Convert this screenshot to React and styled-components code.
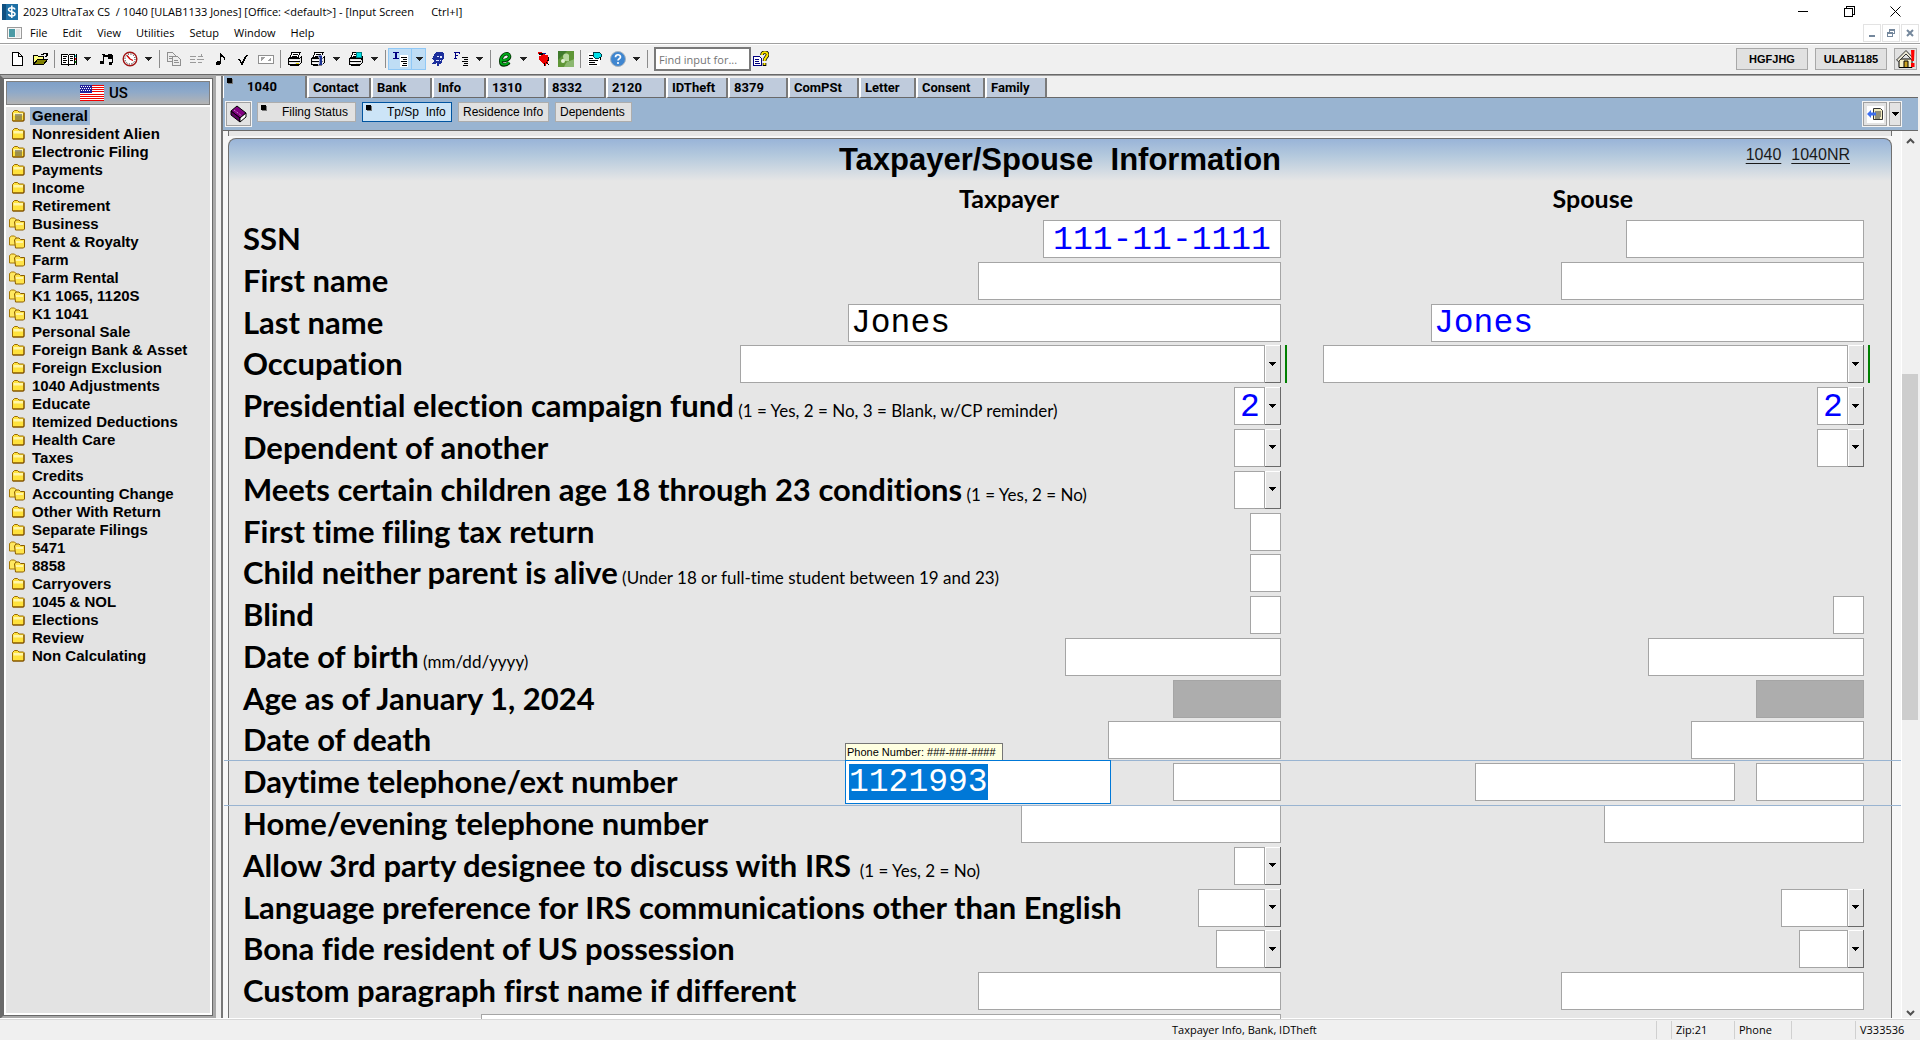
import React, { useEffect, useRef } from "react";
import styled, { createGlobalStyle, css } from "styled-components";

const ui = `"Open Sans", "Noto Sans", sans-serif`;
const arial = `"Liberation Sans", Arial, sans-serif`;
const formFont = `Lato, Carlito, sans-serif`;
const mono = `"Liberation Mono", "Courier New", monospace`;

const Global = createGlobalStyle`
  *, *::before, *::after { box-sizing: border-box; }
  html, body { margin: 0; padding: 0; }
  body { font-family: ${ui}; color: #000; background: #f0f0f0; }
  button, input, select { font: inherit; color: inherit; margin: 0; padding: 0; border-radius: 0; }
`;

const Window = styled.div`
  display: flex;
  flex-direction: column;
  height: 100vh;
  overflow: hidden;
  background: #f0f0f0;
`;

/* ---------- title and menu ---------- */

const TitleBar = styled.header`
  display: flex;
  align-items: center;
  height: 23px;
  flex: none;
  padding: 0 18px 0 2px;
  gap: 5px;
  background: #fff;
  font-size: 11px;
  line-height: 22px;
  white-space: pre;
`;
const Grow = styled.div`
  flex: 1;
`;
const CaptionButtons = styled.div`
  display: flex;
  gap: 32px;
`;
const CaptionButton = styled.button`
  display: flex;
  align-items: center;
  justify-content: center;
  width: 14px;
  height: 20px;
  border: 0;
  background: none;
`;
const MenuBar = styled.nav`
  display: flex;
  align-items: center;
  height: 21px;
  flex: none;
  padding: 0 1px 0 7px;
  background: #fff;
  border-bottom: 1px solid #a0a0a0;
`;
const MenuList = styled.div`
  display: flex;
  flex: 1;
  gap: 15px;
  padding-left: 8px;
`;
const MenuItem = styled.button`
  border: 0;
  background: none;
  font-size: 11px;
  line-height: 18px;
`;
const ChildButtons = styled.div`
  display: flex;
  gap: 1px;
`;
const ChildButton = styled.button`
  display: flex;
  align-items: center;
  justify-content: center;
  width: 18px;
  height: 18px;
  border: 1px solid #e3e3e3;
  background: #fff;
`;

/* ---------- toolbar ---------- */

const Toolbar = styled.div`
  display: flex;
  align-items: center;
  height: 30px;
  flex: none;
  padding: 0 3px 1px 5px;
  background: #f0f0f0;
  border-top: 1px solid #fff;
`;
const ToolButton = styled.button`
  display: flex;
  align-items: center;
  justify-content: center;
  width: 23px;
  height: 22px;
  border: 0;
  background: none;
`;
const DropButton = styled(ToolButton)`
  width: 15px;
`;
const ActiveTool = styled.div`
  display: flex;
  height: 22px;
  background: #bfddf5;
  outline: 1px solid #90c8f6;
  outline-offset: -1px;
  ${DropButton} {
    border-left: 1px solid #90c8f6;
  }
`;
const Separator = styled.span`
  width: 6px;
  height: 18px;
  background: linear-gradient(#8c8c8c, #8c8c8c) center / 1px 100% no-repeat;
`;
const FindBox = styled.input`
  width: 97px;
  height: 24px;
  margin: 0 2px 0 4px;
  padding: 0 3px;
  border: 2px double #7a7a7a;
  outline: 0;
  background: #fff;
  font-size: 11px;
  &::placeholder {
    color: #757575;
    opacity: 1;
  }
`;
const ClientButton = styled.button`
  width: 72px;
  height: 22px;
  margin-right: 7px;
  border: 1px solid #a8a8a8;
  background: #e1e1e1;
  font: bold 11px ${arial};
`;
const HomeButton = styled(ToolButton)`
  border: 1px solid #a8a8a8;
  background: #e1e1e1;
`;

/* ---------- workspace ---------- */

const Workspace = styled.main`
  display: flex;
  flex: 1;
  min-height: 0;
  gap: 5px;
  border-top: 1px solid #696969;
  box-shadow: inset 0 1px 0 #a0a0a0;
`;
const Sidebar = styled.aside`
  display: flex;
  flex-direction: column;
  width: 216px;
  flex: none;
  padding: 1px;
  border: 3px solid #a9a9a9;
  border-left: 3px double #696969;
  background: #696969;
`;
const SidebarInner = styled.div`
  display: flex;
  flex-direction: column;
  flex: 1;
  border: 2px solid #fff;
  background: #e3e3e3;
`;
const Region = styled.button`
  display: flex;
  align-items: center;
  justify-content: center;
  gap: 5px;
  height: 24px;
  flex: none;
  padding-right: 8px;
  border: 1px solid #808080;
  background: linear-gradient(#7fa0c8, #8ea9c9 45%, #b4b4b4);
  font: 500 15px Roboto, sans-serif;
`;
const FolderList = styled.ul`
  margin: 0;
  padding: 0 0 0 3px;
  border-top: 2px solid #fff;
  list-style: none;
`;
const FolderItem = styled.li`
  display: flex;
  align-items: center;
  height: 18px;
  gap: 4px;
`;
const FolderLink = styled.a`
  padding: 0 2px;
  color: #000;
  font: bold 15px/18px ${arial};
  text-decoration: none;
  background: ${(p) => (p.$active ? "#99b4d1" : "none")};
`;

const Screen = styled.section`
  display: flex;
  flex-direction: column;
  flex: 1;
  min-width: 0;
  margin: 1px 2px 0 0;
  border-left: 2px solid #767676;
`;
const Tabs = styled.nav`
  display: flex;
  align-items: flex-end;
  height: 22px;
  flex: none;
  background: linear-gradient(#696969, #696969) bottom / 100% 1px no-repeat;
`;
const Tab = styled.button`
  position: relative;
  width: ${(p) => p.$w}px;
  height: 20px;
  padding: 0 0 0 4px;
  border: 0;
  border-left: 2px solid #fff;
  border-right: 2px solid #7a7a7a;
  border-bottom: 1px solid #696969;
  background: #bfcbdc;
  font: bold 13px/20px Roboto, sans-serif;
  text-align: left;
  ${(p) =>
    p.$active &&
    css`
      height: 22px;
      padding-left: 23px;
      border-bottom: 0;
      border-left-width: 1px;
      background: #99b4d1;
    `}
`;
const Marker = styled.i`
  position: absolute;
  left: 3px;
  top: 2px;
  width: 5px;
  height: 5px;
  background: #000;
  box-shadow: 1px 1px 0 #777;
`;
const SubBar = styled.div`
  display: flex;
  align-items: flex-start;
  gap: 6px;
  height: 33px;
  flex: none;
  padding: 4px 17px 0 3px;
  background: #99b4d1;
  border-bottom: 1px solid #696969;
`;
const SendGroup = styled.div`
  display: flex;
  gap: 2px;
  margin-left: auto;
  outline: 1px solid #f4f4f4;
`;
const BookButton = styled.button`
  display: flex;
  align-items: center;
  justify-content: center;
  width: ${(p) => p.$w}px;
  height: 24px;
  border: 1px solid #a0a0a0;
  outline: 1px solid #f4f4f4;
  background: #e3e3e3;
`;
const SubTab = styled.button`
  position: relative;
  width: ${(p) => p.$w}px;
  height: 20px;
  padding: 0 0 0 ${(p) => (p.$marked ? 24 : 4)}px;
  border: 1px solid ${(p) => (p.$active ? "#0054a0" : "#adadad")};
  background: ${(p) => (p.$active ? "#cce4f7" : "#e1e1e1")};
  font: 12px/18px ${arial};
  text-align: left;
  white-space: pre;
`;

const Body = styled.div`
  display: flex;
  flex: 1;
  min-height: 0;
  overflow: hidden;
  background: #f7f7f7;
`;
const Sheets = styled.div`
  display: flex;
  flex-direction: column;
  flex: 1;
  min-width: 0;
  padding: 0 9px 0 5px;
`;
const PreviousSheet = styled.div`
  height: 5px;
  flex: none;
  margin-bottom: 2px;
  border: solid #707070;
  border-width: 0 1px;
  background: #e6e6e6;
`;
const Sheet = styled.form`
  display: flex;
  flex-direction: column;
  flex: 1;
  min-height: 0;
  border: 1px solid #707070;
  border-bottom: 0;
  border-radius: 8px 8px 0 0;
  background: #e6e6e6 linear-gradient(#99b4d8, #b4c9dd 40%, #e6e6e6) top / 100% 42px no-repeat;
`;
const SheetHead = styled.div`
  display: grid;
  grid-template-columns: 1fr auto 1fr;
  align-items: center;
  height: 42px;
  flex: none;
  padding: 0 41px;
`;
const SheetTitle = styled.h1`
  grid-column: 2;
  margin: 0;
  font: bold 31px/42px ${arial};
  white-space: pre;
`;
const SheetLinks = styled.div`
  display: flex;
  justify-content: flex-end;
  gap: 10px;
  padding-bottom: 10px;
  a {
    color: #1a1a1a;
    font: 16px/20px ${arial};
    text-underline-offset: 3px;
  }
`;
const columns = css`
  display: grid;
  grid-template-columns: 1038fr 583fr;
  padding: 0 27px 0 14px;
`;
const ColumnHeads = styled.div`
  ${columns}
  height: 39px;
  flex: none;
  font: bold 25px/35px ${formFont};
  text-align: right;
  span {
    padding-right: 222px;
  }
  span + span {
    padding-right: 231px;
  }
`;
const Rows = styled.div`
  display: grid;
  grid-template-rows: repeat(19, minmax(41px, 1fr)) 5px;
  flex: 1;
  min-height: 0;
`;
const Row = styled.div`
  ${columns}
  position: relative;
  min-height: 0;
`;
const FocusLines = styled.div`
  position: absolute;
  z-index: 1;
  left: -5px;
  right: -10px;
  top: -3px;
  height: 46px;
  border: solid #99b4d1;
  border-width: 1px 0;
  pointer-events: none;
`;
const Cell = styled.div`
  display: flex;
  justify-content: flex-end;
  position: relative;
  min-width: 0;
  ${(p) => p.$focus && css`z-index: 2;`}
`;
const Label = styled.label`
  flex: 1;
  font: bold 31px/36px ${formFont};
  font-variant-ligatures: none;
  white-space: pre;
`;
const Note = styled.small`
  font: 17px/20px ${formFont};
  font-variant-ligatures: none;
`;
const fieldBox = css`
  height: 38px;
  border: 1px solid #a5a5a5;
  outline: 0;
  background: #fff;
  font: 33px/36px ${mono};
`;
const Field = styled.input`
  ${fieldBox}
  width: ${(p) => p.$w}px;
  flex: none;
  padding: ${(p) => (p.$center ? "2px 0 0" : "2px 2px 0")};
  text-align: ${(p) => (p.$center ? "center" : "left")};
  color: ${(p) => (p.$ink === "own" ? "#000" : "#0000ff")};
  ${(p) => p.readOnly && css`background: #adadad;`}
  ${(p) =>
    p.$focus &&
    css`
      position: relative;
      border-color: #fff;
      box-shadow: 0 0 0 2px #fff, 0 0 0 3px #0078d7;
      padding: 0;
      &::selection {
        background: #0078d7;
        color: #fff;
      }
    `}
`;
const Combo = styled.div`
  display: flex;
  position: relative;
  width: ${(p) => p.$w}px;
  height: 38px;
  flex: none;
`;
const ComboSelect = styled.select`
  ${fieldBox}
  flex: 1;
  min-width: 0;
  padding: 2px 0 0 5px;
  appearance: none;
  color: #0000ff;
`;
const ComboArrow = styled.span`
  display: flex;
  align-items: center;
  justify-content: center;
  width: 16px;
  border: solid #696969;
  border-width: 0 1px 1px 0;
  background: #e6e6e6;
  box-shadow: inset 1px 1px 0 #fff;
`;
const MoreMark = styled.i`
  position: absolute;
  right: -6px;
  top: 0;
  width: 2px;
  height: 38px;
  background: #008000;
`;
const Gap = styled.span`
  width: ${(p) => p.$w}px;
  flex: none;
`;
const Hint = styled.div`
  position: absolute;
  right: 278px;
  top: -20px;
  width: 158px;
  height: 18px;
  padding: 0 2px 0 1px;
  border: 1px solid #767676;
  background: #ffffe1;
  font: 11px/16px ${arial};
  white-space: nowrap;
`;

const ScrollTrack = styled.div`
  display: grid;
  grid-template-rows: 20px 223fr 345fr 281fr 18px;
  justify-items: center;
  align-items: center;
  width: 17px;
  flex: none;
  border-left: 1px solid #fff;
  background: #f0f0f0;
`;
const Thumb = styled.div`
  grid-row: 3;
  width: 100%;
  height: 100%;
  background: #cdcdcd;
`;
const TrackEnd = styled.div`
  grid-row: 5;
`;

const StatusBar = styled.footer`
  display: flex;
  align-items: center;
  height: 21px;
  flex: none;
  border-top: 1px solid #d7d7d7;
  box-shadow: 0 -1px 0 #fff;
  font-size: 11px;
  line-height: 18px;
`;
const StatusMain = styled.div`
  flex: 1;
  display: grid;
  grid-template-columns: 1172fr 484fr;
`;
const StatusCell = styled.div`
  width: ${(p) => p.$w}px;
  height: 18px;
  padding-left: 4px;
  border-left: 1px solid #d0d0d0;
`;

/* ---------- icons ---------- */

const Svg = ({ w = 16, h = 16, children }) => (
  <svg width={w} height={h} viewBox={`0 0 ${w} ${h}`} aria-hidden="true" style={{ display: "block" }} shapeRendering="crispEdges">
    {children}
  </svg>
);
const Down = ({ color = "#222" }) => (
  <Svg w={7} h={4}>
    <path d="M0 0h7v1H0zM1 1h5v1H1zM2 2h3v1H2zM3 3h1v1H3z" fill={color} />
  </Svg>
);
const Sheetlet = ({ x, y }) => (
  <g transform={`translate(${x} ${y})`}>
    <path d="M.5.5h5l3 3v6h-8z" fill="#eee" stroke="#909090" />
    <path d="M2 4.5h4M2 6.5h5" stroke="#909090" />
  </g>
);
const PrinterShape = () => (
  <>
    <path d="M5 1.500h8l-2 5H3z" fill="#fff" stroke="#000" />
    <path d="M6 3.500h5M5 5.500h5" stroke="#000" />
    <path d="M1.500 7.500h11l2-2v6l-2 2h-11z" fill="#e4e4e4" stroke="#000" />
    <path d="M1 10.500h12M3 14.500h9" stroke="#000" />
    <path d="M3 12.500h5M3 9h9" stroke="#fff" />
  </>
);
const icons = {
  fresh: (
    <path d="M3.500 1.500h6l4 4v9h-10zM9.500 1.500v4h4" fill="#fff" stroke="#000" />
  ),
  open: (
    <>
      <path d="M9 3.500h2l1-1h2l1 2M15.500 2v3M13 5.500h2" fill="none" stroke="#000" />
      <path d="M1.500 13.500v-9h4l1 1h5v3h-6z" fill="#ffff80" stroke="#000" />
      <path d="M1.500 13.500l4-5h10l-4 5z" fill="#808000" stroke="#000" />
    </>
  ),
  book: (
    <>
      <path d="M.5 3.500h6l1 1 1-1h5v10h-5l-1 1-1-1h-6z" fill="#fff" stroke="#000" />
      <path d="M7.500 4v10M2 5.500h4M2 7.500h3M2 9.500h4M2 11.500h3M9 5.500h3M9 7.500h3M9 9.500h3" stroke="#000" />
      <path d="M14 4h1v2h-1z" fill="#00c0c0" />
      <path d="M14 7h1v2h-1z" fill="#f00" />
      <path d="M14 10h1v2h-1z" fill="#008000" />
      <path d="M15.500 3v11" stroke="#000" />
    </>
  ),
  notes: (
    <>
      <path d="M3 3h3v1h3v1h4v1h1v6h-1V8H9V6H5v5H4V4H3zM9 3h4v1h1v2h-1V5H9z" fill="#000" />
      <path d="M1 10h3v1h1v2H1zM10 11h3v3h-3z" fill="#000" />
    </>
  ),
  clock: (
    <g shapeRendering="auto">
      <circle cx="8" cy="8" r="6.800" fill="#fff" stroke="#a01414" strokeWidth="1.400" />
      <circle cx="8" cy="8" r="5" fill="none" stroke="#000" strokeWidth="1" strokeDasharray="1 1.600" />
      <path d="M8 8L5 4.500M8 8l3 1.500" stroke="#d00000" strokeWidth="1.300" />
    </g>
  ),
  copy: (
    <>
      <Sheetlet x={1} y={1} />
      <Sheetlet x={6} y={5} />
    </>
  ),
  lines: <path d="M1 5.500h6M1 8.500h5M1 11.500h6M9 5.500h5M12.500 3v2M8 8.500h7M9 11.500h4" stroke="#9a9a9a" />,
  note: (
    <path d="M8 2h1v1h1v1h1v1h1v1h1v3h-1V7h-1V6H9v7H8v1H4v-3h1v-1h3z" fill="#000" />
  ),
  check: <path d="M3 8h2v1h1v2h1v-1h1V8h1V6h1V5h1V4h2v1h-1v1h-1v2h-1v2H9v2H8v2H6v-2H5v-2H4V9H3z" fill="#000" />,
  screen: (
    <>
      <path d="M.5 4.500h15v8H.5z" fill="#fff" stroke="#909090" />
      <path d="M3 10V6h4zM13 6v4H9z" fill="#a0a0a0" />
    </>
  ),
  printer: (
    <>
      <PrinterShape />
      <path d="M9 12h3v1H9z" fill="#e0d000" />
    </>
  ),
  printerOne: (
    <>
      <PrinterShape />
      <path d="M8 4h4v9h1v1H8v-1h1V6H8z" fill="#1a2f8f" stroke="#fff" strokeWidth=".5" />
    </>
  ),
  printerFind: (
    <>
      <PrinterShape />
      <circle cx="11" cy="4" r="3" fill="#00e0e8" stroke="#008080" />
      <path d="M13 7l2 3" stroke="#000" />
    </>
  ),
  inputI: (
    <>
      <path d="M1 1h6v1H5v5h2v1H1V7h2V2H1z" fill="#000080" />
      <path d="M8 4h8v12H8z" fill="#fff" />
      <path d="M9 6.500h6M11 8.500h4M9 10.500h6M11 12.500h4M10 14.500h5" stroke="#000" />
    </>
  ),
  face: (
    <>
      <path d="M6 1h6l2 2v5l-2 1v3l-3 1v2H7v-3L4 13H2l2-3-2-2 2-4z" fill="#1c2f9c" />
      <path d="M7 5h2v1H7zM10 5h2v2h-2zM6 9h3v1H6zM10 9h1v1h-1z" fill="#dfe6ff" />
    </>
  ),
  inputF: (
    <>
      <path d="M1 1h6v2H6V2H3v2h2v1H3v2h1v1H1V7h1V2H1z" fill="#000080" />
      <path d="M9 6.500h6M11 8.500h4M9 10.500h6M11 12.500h4M10 14.500h5" stroke="#000" />
    </>
  ),
  efile: (
    <g shapeRendering="auto" fill="none">
      <path d="M3 9.500c5 1 10-1 9.500-4.500C12 2.500 9 2 6.500 4 3 7 2.500 14 7 14c2.500 0 4-1 5-2.500" stroke="#002800" strokeWidth="3.500" />
      <path d="M3 9c5 1 10-1 9.500-4C12 2.500 9 2 6.500 4 3 7 2.500 13.500 7 13.500c2.500 0 4-1 5-2.500" stroke="#00a818" strokeWidth="2" />
    </g>
  ),
  apple: (
    <>
      <path d="M3 1h4v1h3v2h3v7l-2 2v2H9v-2L7 12 4 9V5h2V3H3z" fill="#f00000" />
      <path d="M4 2h3v1H4zM11 11l3 3M9 12l1 3M12 9l2 1M13 6v3" stroke="#000" fill="#1c2f9c" />
      <path d="M8 2h3v1H8z" fill="#00209c" />
    </>
  ),
  leaf: (
    <g shapeRendering="auto">
      <path d="M0 0h16v16H0z" fill="#5f9636" />
      <path d="M0 0h9L0 9z" fill="#3f7a2c" />
      <path d="M5 5c1-3 4-3 6-1v6c-4 1-6-1-6-5z" fill="#b8d8a0" />
      <path d="M8 12c3-3 6-2 8-4v8H6z" fill="#8cb870" />
      <circle cx="5" cy="10" r="2" fill="#e4f2d8" />
    </g>
  ),
  find: (
    <>
      <path d="M1 2h12v13H1z" fill="#fff" />
      <path d="M2 4.500h4M2 7.500h4M2 9.500h9M2 11.500h6M2 13.500h8" stroke="#000" />
      <path d="M7 1h5l2 2v3l-2 1H8L6 5V2z" fill="#00e0e8" stroke="#004048" />
      <path d="M13 6l1 3" stroke="#000" />
    </>
  ),
  help: (
    <g shapeRendering="auto">
      <circle cx="8" cy="8" r="7.500" fill="#3f86d0" stroke="#a8b4c0" />
      <path d="M5.500 6.200C5.500 3 10.500 3 10.500 6c0 1.800-2.500 1.700-2.500 3.600" fill="none" stroke="#fff" strokeWidth="1.700" />
      <circle cx="8" cy="12" r="1.100" fill="#fff" />
    </g>
  ),
  findHelp: (
    <>
      <path d="M.5 5.500h6l2 2v7h-8z" fill="#fff" stroke="#000080" />
      <path d="M2 8.500h4M2 10.500h4M2 12.500h5" stroke="#000080" />
      <g shapeRendering="auto" fill="none">
        <path d="M9 4c0-4 6-3.500 5.500 0-.3 2-3 2.500-3 6M11.500 12v3" stroke="#000" strokeWidth="3.600" />
        <path d="M9 4c0-4 6-3.500 5.500 0-.3 2-3 2.500-3 6M11.500 12v2" stroke="#ffe800" strokeWidth="2" />
      </g>
    </>
  ),
};
const Tool = ({ icon, label }) => (
  <ToolButton type="button" aria-label={label}>
    <Svg>{icons[icon]}</Svg>
  </ToolButton>
);
const Drop = ({ label }) => (
  <DropButton type="button" aria-label={label}>
    <Down />
  </DropButton>
);

const Flag = () => (
  <Svg w={24} h={16}>
    <path d="M0 0h24v16H0z" fill="#fff" />
    <path d="M0 .5h24M0 2.500h24M0 4.500h24M0 6.500h24M0 9h24M0 11.500h24M0 13.500h24M0 15.500h24" stroke="#f00000" />
    <path d="M0 0h12v8H0z" fill="#22229a" />
    <path d="M1 1.500h10M0 3.500h12M1 5.500h10" stroke="#fff" strokeDasharray="1 1" />
  </Svg>
);

const folderShape = "M1.500 3.500l2-2h3l1.500 1.500h4.500l.5.500v7.500l-1 1h-10.500z";
const Folder = ({ kind }) => (
  <svg width="17" height="14" viewBox="0 0 17 14" aria-hidden="true">
    {kind === "many" ? (
      <>
        <path d="M.5 2.500l2-1.500h3l2 2v7h-7z" fill="#ffe860" stroke="#a87800" />
        <path d="M5.500 5l1.500-2h3l1.500 1.500h4v7.500l-1 1H6.500z" fill="#ffe44a" stroke="#8a5c00" />
        <path d="M7 6h7v2H7z" fill="#fff6a8" />
      </>
    ) : (
      <g transform="translate(2 0)">
        <path d={folderShape} fill="#ffe23c" stroke="#9a6a00" />
        <path d="M2.500 4h9.500v2.500H2.500z" fill="#fff6a8" />
        <path d="M2 12h11V4" fill="none" stroke="#7a4c00" />
        {kind === "used" && <path d="M4 6h7M4 8h7M4 10h7" stroke="#3c3c50" />}
      </g>
    )}
  </svg>
);

const AppIcon = () => (
  <svg width="16" height="16" viewBox="0 0 16 16" aria-hidden="true">
    <path d="M0 0h16v16H0z" fill="#1d6fa5" />
    <path d="M0 0h4v16H0z" fill="#0f4f80" />
    <path d="M13 5.500C12.500 3 6.500 3 6.500 5.500c0 3 6.500 1.500 6.500 4.500 0 2.600-6 2.600-6.500 0M9.800 1.500v12.500" fill="none" stroke="#fff" strokeWidth="1.500" />
  </svg>
);
const ChildIcon = () => (
  <Svg w={15} h={12}>
    <path d="M.5.5h14v11H.5z" fill="#f6f6f6" stroke="#9a9a9a" />
    <path d="M2 2h6v8H2z" fill="#4b9aa5" />
    <path d="M9 2h4v8H9z" fill="#e3e3e3" />
  </Svg>
);
const Book = () => (
  <svg width="18" height="18" viewBox="0 0 18 18" aria-hidden="true">
    <path d="M1 6l6-5 9 7-6 5z" fill="#800080" stroke="#000" />
    <path d="M1 6v4l9 7v-4z" fill="#5a0060" stroke="#000" />
    <path d="M10 13l6-5v4l-6 5z" fill="#fff" stroke="#000" />
    <path d="M4 5l8 6" stroke="#e0a0e0" strokeDasharray="1 1" />
  </svg>
);
const SendDoc = () => (
  <svg width="17" height="17" viewBox="0 0 17 17" aria-hidden="true">
    <path d="M0 0h17v17H0z" fill="#fff" />
    <path d="M6.500 2.500h7l2 2v9h-9z" fill="#f3ecc0" stroke="#333" />
    <path d="M8 6h6M8 8h6M8 10h6M8 12h5" stroke="#333" />
    <path d="M0 8l4-4v2.500h5v3H4V12z" fill="#3d6ff0" />
  </svg>
);
const House = () => (
  <svg width="20" height="20" viewBox="0 0 20 20" aria-hidden="true">
    <path d="M3 10h13v8.500H3z" fill="#f6f0c8" stroke="#000" />
    <path d="M.5 11L10 1.500 18 10l-1.500 1.500L10 5l-7.500 7.500z" fill="#e8e4d0" stroke="#333" />
    <path d="M8 12h4v6.500H8z" fill="#c8a020" stroke="#000" />
    <path d="M15 1h3.500l-.5 11h-2.500zM15 14h3.500v4H15z" fill="#f00" />
  </svg>
);
const Chevron = ({ flip }) => (
  <svg width="9" height="6" viewBox="0 0 9 6" aria-hidden="true">
    <path d={flip ? "M1 1l3.500 3.500L8 1" : "M1 5l3.500-3.500L8 5"} fill="none" stroke="#505050" strokeWidth="2" />
  </svg>
);

/* ---------- data ---------- */

const menus = ["File", "Edit", "View", "Utilities", "Setup", "Window", "Help"];
const folders = [
  ["General", "used"], ["Nonresident Alien"], ["Electronic Filing", "used"], ["Payments"], ["Income"],
  ["Retirement"], ["Business", "many"], ["Rent & Royalty", "many"], ["Farm", "many"], ["Farm Rental", "many"],
  ["K1 1065, 1120S", "many"], ["K1 1041", "many"], ["Personal Sale"], ["Foreign Bank & Asset"],
  ["Foreign Exclusion"], ["1040 Adjustments"], ["Educate"], ["Itemized Deductions"], ["Health Care"],
  ["Taxes"], ["Credits"], ["Accounting Change", "many"], ["Other With Return"], ["Separate Filings"],
  ["5471", "many"], ["8858", "many"], ["Carryovers"], ["1045 & NOL"], ["Elections"], ["Review"],
  ["Non Calculating"],
];
const tabs = [
  ["1040", 84], ["Contact", 64], ["Bank", 61], ["Info", 54], ["1310", 60], ["8332", 60], ["2120", 60],
  ["IDTheft", 62], ["8379", 60], ["ComPSt", 71], ["Letter", 57], ["Consent", 69], ["Family", 62],
];
const subTabs = [
  { text: "Filing Status", w: 99, marked: true },
  { text: "Tp/Sp  Info", w: 90, marked: true, active: true },
  { text: "Residence Info", w: 91 },
  { text: "Dependents", w: 77 },
];

const text = (w, value, extra) => ({ type: "text", w, value, ...extra });
const pick = (w, value, extra) => ({ type: "pick", w, value, ...extra });
const gap = (w) => ({ type: "gap", w });

const rows = [
  { label: "SSN", tp: [text(238, "111-11-1111", { center: true })], sp: [text(238)] },
  { label: "First name", tp: [text(303)], sp: [text(303)] },
  { label: "Last name", tp: [text(433, "Jones", { ink: "own" })], sp: [text(433, "Jones")] },
  { label: "Occupation", tp: [pick(541, "", { more: true })], sp: [pick(541, "", { more: true })] },
  {
    label: "Presidential election campaign fund",
    note: "(1 = Yes, 2 = No, 3 = Blank, w/CP reminder)",
    tp: [pick(47, "2")],
    sp: [pick(47, "2")],
  },
  { label: "Dependent of another", tp: [pick(47)], sp: [pick(47)] },
  { label: "Meets certain children age 18 through 23 conditions", note: "(1 = Yes, 2 = No)", tp: [pick(47)] },
  { label: "First time filing tax return", tp: [text(31)] },
  { label: "Child neither parent is alive", note: "(Under 18 or full-time student between 19 and 23)", tp: [text(31)] },
  { label: "Blind", tp: [text(31)], sp: [text(31)] },
  { label: "Date of birth", note: "(mm/dd/yyyy)", tp: [text(216)], sp: [text(216)] },
  { label: "Age as of January 1, 2024", tp: [text(108, "", { locked: true })], sp: [text(108, "", { locked: true })] },
  { label: "Date of death", tp: [text(173)], sp: [text(173)] },
  {
    label: "Daytime telephone/ext number",
    focus: true,
    tp: [text(260, "1121993", { focus: true }), gap(65), text(108)],
    sp: [text(260), gap(21), text(108)],
  },
  { label: "Home/evening telephone number", tp: [text(260)], sp: [text(260)] },
  { label: "Allow 3rd party designee to discuss with IRS", note: " (1 = Yes, 2 = No)", tp: [pick(47)] },
  { label: "Language preference for IRS communications other than English", tp: [pick(83)], sp: [pick(83)] },
  { label: "Bona fide resident of US possession", tp: [pick(65)], sp: [pick(65)] },
  { label: "Custom paragraph first name if different", tp: [text(303)], sp: [text(303)] },
  { label: "", tp: [text(800)] },
];

const Control = ({ spec, id, label, focusRef }) => {
  if (spec.type === "gap") return <Gap $w={spec.w} />;
  if (spec.type === "pick") {
    return (
      <Combo $w={spec.w}>
        <ComboSelect id={id} aria-label={label} defaultValue={spec.value || ""}>
          <option value="" />
          <option value="1">1</option>
          <option value="2">2</option>
        </ComboSelect>
        <ComboArrow>
          <Down color="#000" />
        </ComboArrow>
        {spec.more && <MoreMark />}
      </Combo>
    );
  }
  return (
    <Field
      id={id}
      aria-label={label}
      ref={spec.focus ? focusRef : undefined}
      type="text"
      defaultValue={spec.value || ""}
      readOnly={spec.locked}
      $w={spec.w}
      $center={spec.center}
      $ink={spec.ink}
      $focus={spec.focus}
    />
  );
};

const FormRow = ({ row, index, focusRef }) => (
  <Row>
    {row.focus && <FocusLines />}
    <Cell $focus={row.focus}>
      <Label htmlFor={`tp-${index}-0`}>
        {row.label}
        {row.note && <Note> {row.note}</Note>}
      </Label>
      {row.focus && <Hint>Phone Number: ###-###-####</Hint>}
      {row.tp.map((spec, i) => (
        <Control key={i} spec={spec} id={`tp-${index}-${i}`} label={`Taxpayer ${row.label}`} focusRef={focusRef} />
      ))}
    </Cell>
    <Cell>
      {(row.sp || []).map((spec, i) => (
        <Control key={i} spec={spec} id={`sp-${index}-${i}`} label={`Spouse ${row.label}`} />
      ))}
    </Cell>
  </Row>
);

export default function App() {
  const focusRef = useRef(null);
  useEffect(() => {
    focusRef.current.focus({ preventScroll: true });
    focusRef.current.select();
  }, []);

  return (
    <Window>
      <Global />
      <TitleBar>
        <AppIcon />
        {"2023 UltraTax CS  / 1040 [ULAB1133 Jones] [Office: <default>] - [Input Screen      Ctrl+I]"}
        <Grow />
        <CaptionButtons>
          <CaptionButton aria-label="Minimize">
            <Svg w={11} h={11}><path d="M0 5.500h10" stroke="#000" /></Svg>
          </CaptionButton>
          <CaptionButton aria-label="Restore">
            <Svg w={11} h={11}><path d="M.5 2.500h8v8h-8zM2.500 2V.5h8v8H9" fill="none" stroke="#000" /></Svg>
          </CaptionButton>
          <CaptionButton aria-label="Close">
            <svg width="11" height="11" viewBox="0 0 11 11"><path d="M.5.5l10 10M10.500.5l-10 10" stroke="#000" /></svg>
          </CaptionButton>
        </CaptionButtons>
      </TitleBar>
      <MenuBar>
        <ChildIcon />
        <MenuList>
          {menus.map((m) => (
            <MenuItem key={m} type="button">{m}</MenuItem>
          ))}
        </MenuList>
        <ChildButtons>
          <ChildButton aria-label="Minimize input screen">
            <Svg w={8} h={8}><path d="M1 6h6v2H1z" fill="#74879c" /></Svg>
          </ChildButton>
          <ChildButton aria-label="Restore input screen">
            <Svg w={8} h={8}><path d="M.5 4h5v3.500h-5zM2.500 3V.5h5v4H6M0 3.500h6M2 1h6" fill="none" stroke="#74879c" /></Svg>
          </ChildButton>
          <ChildButton aria-label="Close input screen">
            <svg width="8" height="8" viewBox="0 0 8 8"><path d="M1 1l6 6M7 1L1 7" stroke="#74879c" strokeWidth="2" /></svg>
          </ChildButton>
        </ChildButtons>
      </MenuBar>

      <Toolbar>
        <Tool icon="fresh" label="New" />
        <Tool icon="open" label="Open" />
        <Separator />
        <Tool icon="book" label="Books" />
        <Drop label="More books" />
        <Tool icon="notes" label="Notes" />
        <Tool icon="clock" label="Timer" />
        <Drop label="Timer options" />
        <Separator />
        <Tool icon="copy" label="Copy" />
        <Tool icon="lines" label="Lines" />
        <Tool icon="note" label="Note" />
        <Tool icon="check" label="Check" />
        <Tool icon="screen" label="Zoom" />
        <Separator />
        <Tool icon="printer" label="Print" />
        <Tool icon="printerOne" label="Print page" />
        <Drop label="Print page options" />
        <Tool icon="printerFind" label="Preview" />
        <Drop label="Preview options" />
        <Separator />
        <ActiveTool>
          <Tool icon="inputI" label="Input" />
          <Drop label="Input options" />
        </ActiveTool>
        <Tool icon="face" label="Taxpayer" />
        <Tool icon="inputF" label="Forms" />
        <Drop label="Forms options" />
        <Separator />
        <Tool icon="efile" label="Electronic filing" />
        <Drop label="Electronic filing options" />
        <Tool icon="apple" label="Diagnostics" />
        <Tool icon="leaf" label="Research" />
        <Separator />
        <Tool icon="find" label="Find" />
        <Tool icon="help" label="Help" />
        <Drop label="Help options" />
        <Separator />
        <FindBox aria-label="Find input" placeholder="Find input for..." />
        <Svg>{icons.findHelp}</Svg>
        <Grow />
        <ClientButton type="button">HGFJHG</ClientButton>
        <ClientButton type="button">ULAB1185</ClientButton>
        <HomeButton type="button" aria-label="Home"><House /></HomeButton>
      </Toolbar>

      <Workspace>
        <Sidebar>
          <SidebarInner>
            <Region type="button"><Flag />US</Region>
            <FolderList>
              {folders.map(([name, kind], i) => (
                <FolderItem key={name}>
                  <Folder kind={kind} />
                  <FolderLink href="#" $active={i === 0}>{name}</FolderLink>
                </FolderItem>
              ))}
            </FolderList>
          </SidebarInner>
        </Sidebar>

        <Screen>
          <Tabs>
            {tabs.map(([name, w], i) => (
              <Tab key={name} type="button" $w={w} $active={i === 0}>
                {i === 0 && <Marker />}
                {name}
              </Tab>
            ))}
          </Tabs>
          <SubBar>
            <BookButton type="button" aria-label="Help book" $w={25}><Book /></BookButton>
            {subTabs.map((t) => (
              <SubTab key={t.text} type="button" $w={t.w} $marked={t.marked} $active={t.active}>
                {t.marked && <Marker />}
                {t.text}
              </SubTab>
            ))}
            <SendGroup>
              <BookButton type="button" aria-label="Send" $w={24}><SendDoc /></BookButton>
              <BookButton type="button" aria-label="Send options" $w={12}><Down color="#000" /></BookButton>
            </SendGroup>
          </SubBar>
          <Body>
            <Sheets>
              <PreviousSheet />
              <Sheet>
                <SheetHead>
                  <SheetTitle>{"Taxpayer/Spouse  Information"}</SheetTitle>
                  <SheetLinks>
                    <a href="#1040">1040</a>
                    <a href="#1040nr">1040NR</a>
                  </SheetLinks>
                </SheetHead>
                <ColumnHeads>
                  <span>Taxpayer</span>
                  <span>Spouse</span>
                </ColumnHeads>
                <Rows>
                  {rows.map((row, i) => (
                    <FormRow key={i} row={row} index={i} focusRef={focusRef} />
                  ))}
                </Rows>
              </Sheet>
            </Sheets>
            <ScrollTrack>
              <Chevron />
              <Thumb />
              <TrackEnd><Chevron flip /></TrackEnd>
            </ScrollTrack>
          </Body>
        </Screen>
      </Workspace>

      <StatusBar>
        <StatusMain>
          <span />
          <span>Taxpayer Info, Bank, IDTheft</span>
        </StatusMain>
        <StatusCell $w={15} />
        <StatusCell $w={63}>Zip:21</StatusCell>
        <StatusCell $w={57}>Phone</StatusCell>
        <StatusCell $w={64} />
        <StatusCell $w={65}>V333536</StatusCell>
      </StatusBar>
    </Window>
  );
}
